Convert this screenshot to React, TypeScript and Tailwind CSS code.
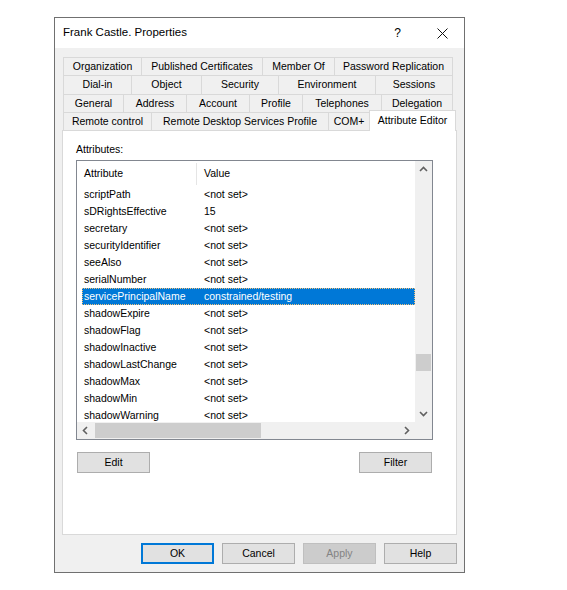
import React from "react";

type Tab = { label: string; w: string };

const ROWS: Tab[][] = [
  [
    { label: "Organization", w: "w-[78px]" },
    { label: "Published Certificates", w: "w-[121px]" },
    { label: "Member Of", w: "w-[72px]" },
    { label: "Password Replication", w: "w-[119px]" },
  ],
  [
    { label: "Dial-in", w: "w-[68px]" },
    { label: "Object", w: "w-[70px]" },
    { label: "Security", w: "w-[77px]" },
    { label: "Environment", w: "w-[97px]" },
    { label: "Sessions", w: "w-[78px]" },
  ],
  [
    { label: "General", w: "w-[60px]" },
    { label: "Address", w: "w-[63px]" },
    { label: "Account", w: "w-[63px]" },
    { label: "Profile", w: "w-[53px]" },
    { label: "Telephones", w: "w-[79px]" },
    { label: "Delegation", w: "w-[72px]" },
  ],
];

const LAST_ROW: Tab[] = [
  { label: "Remote control", w: "w-[88px]" },
  { label: "Remote Desktop Services Profile", w: "w-[177px]" },
  { label: "COM+", w: "w-[41px]" },
];

const ATTRS: [string, string][] = [
  ["scriptPath", "<not set>"],
  ["sDRightsEffective", "15"],
  ["secretary", "<not set>"],
  ["securityIdentifier", "<not set>"],
  ["seeAlso", "<not set>"],
  ["serialNumber", "<not set>"],
  ["servicePrincipalName", "constrained/testing"],
  ["shadowExpire", "<not set>"],
  ["shadowFlag", "<not set>"],
  ["shadowInactive", "<not set>"],
  ["shadowLastChange", "<not set>"],
  ["shadowMax", "<not set>"],
  ["shadowMin", "<not set>"],
  ["shadowWarning", "<not set>"],
];

const SELECTED = "servicePrincipalName";

function Chevron({ dir }: { dir: "up" | "down" | "left" | "right" }) {
  const rot = { up: 0, right: 90, down: 180, left: 270 }[dir];
  return (
    <svg width="9" height="9" viewBox="0 0 9 9" style={{ transform: `rotate(${rot}deg)` }}>
      <polyline points="1,6 4.5,2.5 8,6" fill="none" stroke="#606060" strokeWidth="1.6" />
    </svg>
  );
}

function Button({ label, disabled, primary, className = "" }: { label: string; disabled?: boolean; primary?: boolean; className?: string }) {
  let look = "bg-[#e1e1e1] border border-[#adadad] text-black";
  if (disabled) look = "bg-[#cccccc] border border-[#bfbfbf] text-[#838383]";
  if (primary) look = "bg-[#e1e1e1] border-2 border-[#0078d7] text-black";
  return (
    <div className={`w-[73px] h-[21px] flex items-center justify-center leading-none ${look} ${className}`}>
      {label}
    </div>
  );
}

export default function App() {
  return (
    <div className="min-h-screen bg-white pl-[54px] pt-[17px] font-['Liberation_Sans',Arial,sans-serif] text-[10.5px] text-black">
      <div className="w-[411px] h-[556px] border border-[#707070] bg-[#f0f0f0] flex flex-col">
        {/* Title bar */}
        <div className="h-[30px] bg-white flex items-center pl-[8px] shrink-0">
          <span className="flex-1 text-[11.5px]">Frank Castle. Properties</span>
          <span className="w-[45px] text-center text-[12px]">?</span>
          <span className="w-[44px] flex justify-center">
            <svg width="11" height="11" viewBox="0 0 11 11">
              <path d="M0.5 0.5 L10.5 10.5 M10.5 0.5 L0.5 10.5" stroke="#111" strokeWidth="1" />
            </svg>
          </span>
        </div>

        {/* Body */}
        <div className="flex-1 pl-[7px] pt-[9px] flex flex-col">
          {/* Tabs */}
          <div className="ml-[1px] flex flex-col">
            {ROWS.map((row, i) => (
              <div key={i} className={`flex ${i === 1 ? "h-[19px]" : "h-[18px]"}`}>
                {row.map((t, j) => (
                  <div
                    key={t.label}
                    className={`${t.w} border-t border-l border-[#d9d9d9] ${j === row.length - 1 ? "border-r" : ""} flex items-center justify-center whitespace-nowrap`}
                  >
                    {t.label}
                  </div>
                ))}
              </div>
            ))}
            <div className="flex h-[18px] items-start">
              {LAST_ROW.map((t) => (
                <div
                  key={t.label}
                  className={`${t.w} h-[18px] border-t border-l border-[#d9d9d9] flex items-center justify-center whitespace-nowrap`}
                >
                  {t.label}
                </div>
              ))}
              <div className="relative z-10 w-[87px] -mt-[2px] h-[21px] bg-white border-t border-l border-r border-[#d9d9d9] flex justify-center pt-[2px] whitespace-nowrap">
                Attribute Editor
              </div>
            </div>
          </div>

          {/* Panel */}
          <div className="w-[395px] h-[405px] bg-white border border-[#d9d9d9] pl-[13px] pt-[11px] flex flex-col">
            <div className="leading-[14px] mb-[4px]">Attributes:</div>

            <div className="w-[357px] h-[280px] border border-[#828790] grid grid-cols-[1fr_17px] grid-rows-[1fr_17px]">
              {/* List content */}
              <div className="overflow-hidden">
                <div className="h-[25px] flex items-center">
                  <div className="w-[120px] pl-[7px] h-[22px] flex items-center border-r border-[#e5e5e5]">Attribute</div>
                  <div className="pl-[7px]">Value</div>
                </div>
                {ATTRS.map(([name, value]) => {
                  const sel = name === SELECTED;
                  return (
                    <div
                      key={name}
                      className={`ml-[5px] h-[17px] flex items-center whitespace-nowrap ${
                        sel ? "bg-[#0078d7] text-white outline-1 outline-dotted outline-[#f2c27c] -outline-offset-1" : ""
                      }`}
                    >
                      <div className="w-[120px] pl-[2px]">{name}</div>
                      <div className="pl-[2px]">{value}</div>
                    </div>
                  );
                })}
              </div>

              {/* Vertical scrollbar */}
              <div className="bg-[#f0f0f0] flex flex-col">
                <div className="h-[17px] flex items-center justify-center">
                  <Chevron dir="up" />
                </div>
                <div className="flex-1">
                  <div className="mt-[176px] mx-[1px] h-[17px] bg-[#cdcdcd]" />
                </div>
                <div className="h-[17px] flex items-center justify-center">
                  <Chevron dir="down" />
                </div>
              </div>

              {/* Horizontal scrollbar */}
              <div className="bg-[#f0f0f0] flex items-center">
                <div className="w-[17px] h-full flex items-center justify-center">
                  <Chevron dir="left" />
                </div>
                <div className="flex-1 h-full py-[1px]">
                  <div className="ml-[1px] w-[166px] h-full bg-[#cdcdcd]" />
                </div>
                <div className="w-[17px] h-full flex items-center justify-center">
                  <Chevron dir="right" />
                </div>
              </div>
              <div className="bg-[#f0f0f0]" />
            </div>

            <div className="w-[355px] ml-[1px] mt-[12px] flex justify-between">
              <Button label="Edit" />
              <Button label="Filter" />
            </div>
          </div>

          {/* Dialog buttons */}
          <div className="w-[395px] mt-[8px] flex justify-end gap-[8px]">
            <Button label="OK" primary />
            <Button label="Cancel" />
            <Button label="Apply" disabled />
            <Button label="Help" />
          </div>
        </div>
      </div>
    </div>
  );
}
